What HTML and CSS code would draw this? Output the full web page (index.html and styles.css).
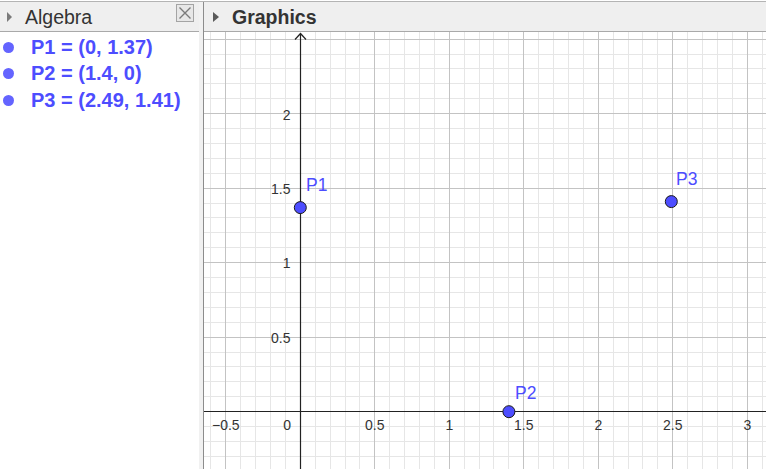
FILE: index.html
```html
<!DOCTYPE html>
<html>
<head>
<meta charset="utf-8">
<title>GeoGebra</title>
<link rel="stylesheet" href="styles.css">
</head>
<body>
<div class="app">
  <section class="algebra">
    <div class="header">
      <span class="tri"></span>
      <span class="title">Algebra</span>
      <span class="close">
        <svg width="16" height="16" viewBox="0 0 16 16"><path class="close-x" d="M2.5 2.5L13.5 13.5M13.5 2.5L2.5 13.5"/></svg>
      </span>
    </div>
    <ul class="items">
      <li><span class="dot"></span><span class="expr">P1 = (0, 1.37)</span></li>
      <li><span class="dot"></span><span class="expr">P2 = (1.4, 0)</span></li>
      <li><span class="dot"></span><span class="expr">P3 = (2.49, 1.41)</span></li>
    </ul>
  </section>
  <div class="splitter"></div>
  <section class="graphics">
    <div class="header gheader">
      <span class="tri dark"></span>
      <span class="title bold">Graphics</span>
    </div>
    <svg class="canvas" width="562" height="437" viewBox="204 32 562 437">
      <path class="grid-minor" d="M210.5 32V469M240.5 32V469M255.5 32V469M270.5 32V469M285.5 32V469M315.5 32V469M330.5 32V469M345.5 32V469M359.5 32V469M389.5 32V469M404.5 32V469M419.5 32V469M434.5 32V469M464.5 32V469M479.5 32V469M493.5 32V469M508.5 32V469M538.5 32V469M553.5 32V469M568.5 32V469M583.5 32V469M613.5 32V469M628.5 32V469M642.5 32V469M657.5 32V469M687.5 32V469M702.5 32V469M717.5 32V469M732.5 32V469M762.5 32V469M204 456.5H766M204 441.5H766M204 426.5H766M204 396.5H766M204 381.5H766M204 366.5H766M204 352.5H766M204 322.5H766M204 307.5H766M204 292.5H766M204 277.5H766M204 247.5H766M204 232.5H766M204 217.5H766M204 203.5H766M204 173.5H766M204 158.5H766M204 143.5H766M204 128.5H766M204 98.5H766M204 83.5H766M204 68.5H766M204 54.5H766"/>
      <path class="grid-major" d="M225.5 32V469M374.5 32V469M449.5 32V469M523.5 32V469M598.5 32V469M672.5 32V469M747.5 32V469M204 337.5H766M204 262.5H766M204 188.5H766M204 113.5H766M204 39.5H766"/>
      <path class="axis" d="M204 411.5H766M300.5 33.5V469M295 39.5L300.5 33.5L306 39.5"/>
      <g class="axis-label">
        <text x="225.8" y="430" text-anchor="middle">−0.5</text>
        <text x="291" y="430" text-anchor="end">0</text>
        <text x="374.8" y="430" text-anchor="middle">0.5</text>
        <text x="449.3" y="430" text-anchor="middle">1</text>
        <text x="523.8" y="430" text-anchor="middle">1.5</text>
        <text x="598.3" y="430" text-anchor="middle">2</text>
        <text x="672.8" y="430" text-anchor="middle">2.5</text>
        <text x="747.3" y="430" text-anchor="middle">3</text>
        <text x="290.5" y="343" text-anchor="end">0.5</text>
        <text x="290.5" y="268" text-anchor="end">1</text>
        <text x="290.5" y="193.5" text-anchor="end">1.5</text>
        <text x="290.5" y="119.5" text-anchor="end">2</text>
      </g>
      <g class="points">
        <circle cx="300.3" cy="207.6" r="6"/>
        <circle cx="508.9" cy="411.7" r="6"/>
        <circle cx="671.3" cy="201.6" r="6"/>
      </g>
      <g class="point-label">
        <text x="306" y="191">P1</text>
        <text x="515" y="399">P2</text>
        <text x="676" y="185">P3</text>
      </g>
    </svg>
  </section>
</div>
</body>
</html>
```
FILE: styles.css
```css
html, body {
  margin: 0;
  padding: 0;
  background: #ffffff;
  width: 766px;
  height: 469px;
  overflow: hidden;
}

.app {
  display: flex;
  margin-top: 1px;
  border-top: 1px solid #b4b4b4;
  height: 467px;
  font-family: "Liberation Sans", Arial, sans-serif;
}

.algebra {
  width: 199px;
  flex: none;
  background: #ffffff;
}

.splitter {
  width: 4px;
  flex: none;
  background: #f1f1f1;
}

.graphics {
  flex: 1;
  border-left: 1px solid #8c8c8c;
  display: flex;
  flex-direction: column;
  min-width: 0;
}

.header {
  height: 29px;
  background: #efefef;
  border-bottom: 1px solid #a9a9a9;
  display: flex;
  align-items: center;
}

.tri {
  width: 0;
  height: 0;
  border-left: 5px solid #7a7a7a;
  border-top: 5px solid transparent;
  border-bottom: 5px solid transparent;
  margin-left: 7px;
  margin-top: 1px;
}

.tri.dark {
  border-left-color: #5a5a5a;
  margin-left: 9px;
  border-left-width: 6px;
}

.title {
  font-size: 19.5px;
  color: #333333;
  margin-left: 13px;
  margin-top: 1px;
}

.title.bold {
  font-weight: bold;
  margin-left: 13px;
}

.close {
  margin-left: auto;
  margin-right: 5px;
  align-self: flex-start;
  margin-top: 2px;
  width: 16px;
  height: 16px;
  border: 1px solid #a4a4a4;
  background: #e7e7e7;
  display: flex;
}

.close-x {
  stroke: #7a7a7a;
  stroke-width: 1.4;
  fill: none;
}

.items {
  list-style: none;
  margin: 0;
  padding: 2px 0 0 0;
}

.items li {
  height: 26.5px;
  display: flex;
  align-items: center;
}

.dot {
  width: 11px;
  height: 11px;
  border-radius: 50%;
  background: #6464ff;
  margin-left: 3px;
  flex: none;
}

.expr {
  margin-left: 17px;
  font-size: 20px;
  font-weight: bold;
  color: #4d4dff;
  white-space: nowrap;
}

.canvas {
  display: block;
}

.grid-minor {
  stroke: #e6e6e6;
  stroke-width: 1;
  fill: none;
}

.grid-major {
  stroke: #c3c3c3;
  stroke-width: 1;
  fill: none;
}

.axis {
  stroke: #222222;
  stroke-width: 1.2;
  fill: none;
}

.axis-label {
  font-family: "Liberation Sans", Arial, sans-serif;
  font-size: 14px;
  fill: #333333;
}

.points circle {
  fill: #4d4dff;
  stroke: #1a1a1a;
  stroke-width: 1;
}

.point-label {
  font-family: "Liberation Sans", Arial, sans-serif;
  font-size: 17.5px;
  fill: #4d4dff;
}
```
